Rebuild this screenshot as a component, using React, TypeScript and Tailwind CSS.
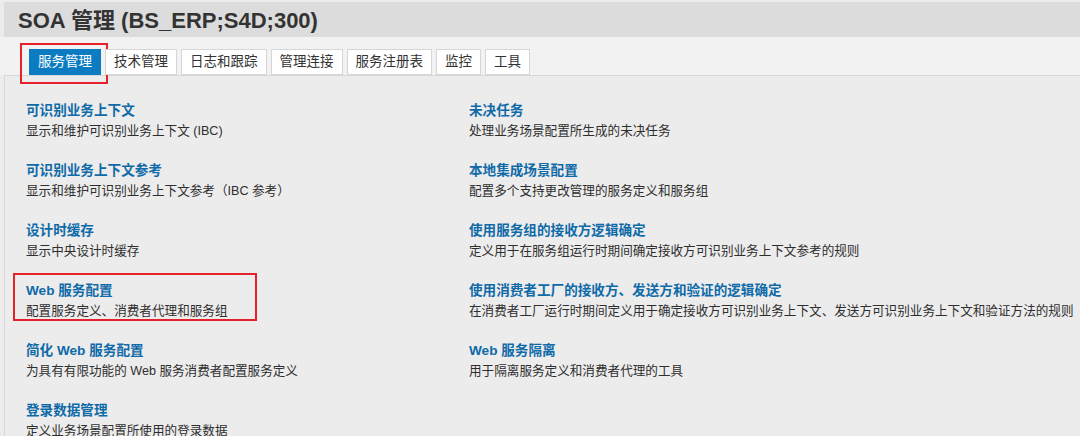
const tabs = ["服务管理", "技术管理", "日志和跟踪", "管理连接", "服务注册表", "监控", "工具"];

interface Entry {
  title: string;
  desc: string;
  marked?: boolean;
}

const rows: [Entry | null, Entry | null][] = [
  [
    { title: "可识别业务上下文", desc: "显示和维护可识别业务上下文 (IBC)" },
    { title: "未决任务", desc: "处理业务场景配置所生成的未决任务" },
  ],
  [
    { title: "可识别业务上下文参考", desc: "显示和维护可识别业务上下文参考（IBC 参考）" },
    { title: "本地集成场景配置", desc: "配置多个支持更改管理的服务定义和服务组" },
  ],
  [
    { title: "设计时缓存", desc: "显示中央设计时缓存" },
    { title: "使用服务组的接收方逻辑确定", desc: "定义用于在服务组运行时期间确定接收方可识别业务上下文参考的规则" },
  ],
  [
    { title: "Web 服务配置", desc: "配置服务定义、消费者代理和服务组", marked: true },
    {
      title: "使用消费者工厂的接收方、发送方和验证的逻辑确定",
      desc: "在消费者工厂运行时期间定义用于确定接收方可识别业务上下文、发送方可识别业务上下文和验证方法的规则",
    },
  ],
  [
    { title: "简化 Web 服务配置", desc: "为具有有限功能的 Web 服务消费者配置服务定义" },
    { title: "Web 服务隔离", desc: "用于隔离服务定义和消费者代理的工具" },
  ],
  [{ title: "登录数据管理", desc: "定义业务场景配置所使用的登录数据" }, null],
];

function Item({ e }: { e: Entry | null }) {
  if (!e) return <div />;
  return (
    <div className="relative whitespace-nowrap">
      {e.marked && (
        <div className="absolute -left-[13px] -top-[7px] h-[48px] w-[244px] border-2 border-[#e5222b]" />
      )}
      <a className="block text-[13.6px] font-bold leading-[21px] text-[#0f6aa8]">{e.title}</a>
      <p className="text-[12.6px] leading-[20px] text-[#2e2e2e]">{e.desc}</p>
    </div>
  );
}

export default function App() {
  return (
    <div
      className="h-[436px] w-[1080px] overflow-hidden bg-[#ececec] pt-[2px]"
      style={{ fontFamily: '"Liberation Sans", "Noto Sans CJK SC", sans-serif' }}
    >
      <header className="ml-[4px] h-[35px] bg-[#dcdcdc] pl-[14px]">
        <h1 className="text-[22px] font-bold leading-[38px] text-[#333333]">SOA 管理 (BS_ERP;S4D;300)</h1>
      </header>

      <nav className="flex h-[38px] items-end gap-[4px] bg-[#f2f2f2] pl-[29px]">
        {tabs.map((t, i) => (
          <div key={t} className="relative">
            {i === 0 && (
              <div className="absolute -left-[9px] -top-[6px] h-[41px] w-[88px] border-2 border-[#e5222b]" />
            )}
            <button
              className={`h-[26px] border px-[8px] text-[13.5px] leading-[24px] ${
                i === 0
                  ? "border-[#0b7cc2] bg-[#0b7cc2] text-white"
                  : "border-[#d6d6d6] bg-white text-[#333333]"
              }`}
            >
              {t}
            </button>
          </div>
        ))}
      </nav>

      <main className="ml-[4px] border-l border-t border-[#d8d8d8] pl-[21px] pt-[24px]">
        <div className="grid grid-cols-[443px_1fr] gap-y-[19px]">
          {rows.map(([l, r], i) => (
            <div key={i} className="contents">
              <Item e={l} />
              <Item e={r} />
            </div>
          ))}
        </div>
      </main>
    </div>
  );
}
